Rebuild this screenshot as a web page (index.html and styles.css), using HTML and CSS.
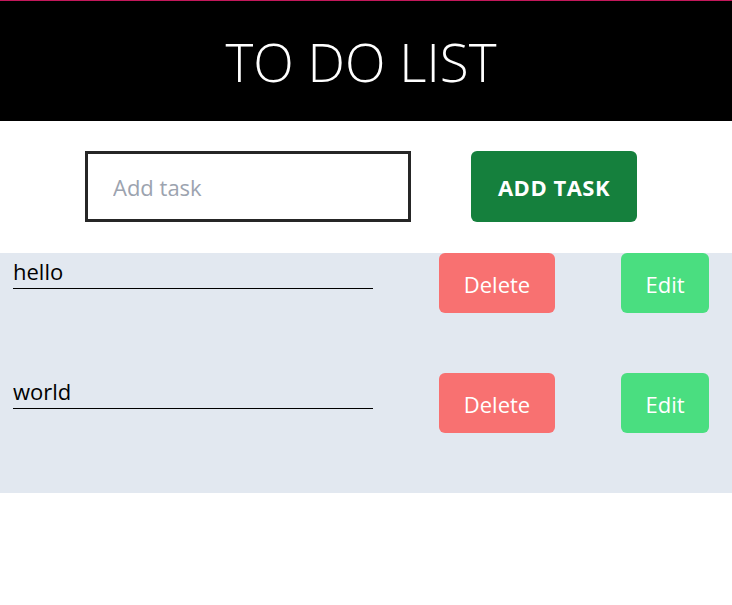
FILE: index.html
```html
<!DOCTYPE html>
<html lang="en">
<head>
<meta charset="utf-8">
<title>To Do List</title>
<link rel="stylesheet" href="styles.css">
</head>
<body>
  <header class="top">
    <h1 class="title">TO DO LIST</h1>
  </header>
  <section class="composer">
    <input class="task-input" type="text" placeholder="Add task">
    <button class="add-btn">ADD TASK</button>
  </section>
  <ul class="tasks">
    <li class="task">
      <input class="task-text" type="text" value="hello" readonly>
      <button class="btn btn-delete">Delete</button>
      <button class="btn btn-edit">Edit</button>
    </li>
    <li class="task">
      <input class="task-text" type="text" value="world" readonly>
      <button class="btn btn-delete">Delete</button>
      <button class="btn btn-edit">Edit</button>
    </li>
  </ul>
</body>
</html>
```
FILE: styles.css
```css
* { box-sizing: border-box; }
html, body { margin: 0; padding: 0; }
body {
  font-family: "Open Sans", "Noto Sans", "Liberation Sans", sans-serif;
  background: #ffffff;
  color: #000;
  border-top: 1px solid #c2185b;
}
.top {
  background: #000;
  height: 120px;
  display: flex;
  align-items: center;
  justify-content: center;
  padding-right: 10px;
}
.title {
  margin: 0;
  color: #fff;
  font-weight: 300;
  font-size: 53px;
  letter-spacing: 0;
  line-height: 1;
}
.composer {
  display: flex;
  justify-content: center;
  align-items: center;
  gap: 60px;
  padding: 30px 10px 31px 0;
}
.task-input {
  width: 326px;
  height: 71px;
  border: 3px solid #262626;
  padding: 0 0 0 25px;
  font-family: inherit;
  font-size: 22px;
  color: #000;
  outline: none;
}
.task-input::placeholder { color: #9ca3af; }
.add-btn {
  width: 166px;
  height: 71px;
  border: none;
  border-radius: 6px;
  background: #15803d;
  color: #fff;
  font-family: inherit;
  font-weight: 700;
  font-size: 22px;
  letter-spacing: 0.5px;
  padding: 0;
  cursor: pointer;
}
.tasks {
  list-style: none;
  margin: 0;
  padding: 0;
  background: #e2e8f0;
}
.task {
  height: 120px;
  display: flex;
  align-items: flex-start;
  padding-left: 13px;
  gap: 66px;
}
.task-text {
  width: 360px;
  height: 36px;
  background: transparent;
  border: none;
  border-bottom: 1px solid #000;
  padding: 0;
  font-family: inherit;
  font-size: 22px;
  color: #000;
  outline: none;
}
.btn {
  height: 60px;
  border: none;
  border-radius: 6px;
  color: #fff;
  font-family: inherit;
  font-size: 22px;
  padding: 1px 0 0;
  cursor: pointer;
}
.btn-delete { width: 116px; background: #f87171; }
.btn-edit { width: 88px; background: #4ade80; }
```
